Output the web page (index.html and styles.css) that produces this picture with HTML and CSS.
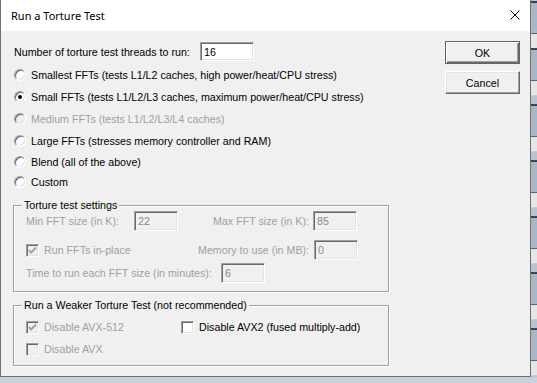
FILE: index.html
```html
<!DOCTYPE html>
<html lang="en">
<head>
  <meta charset="UTF-8">
  <meta name="viewport" content="width=device-width, initial-scale=1.0">
  <title>Run a Torture Test</title>
  <link rel="stylesheet" href="styles.css">
</head>
<body>
  <div class="dialog">
    <div class="titlebar">
      <span class="title">Run a Torture Test</span>
      <svg class="close" width="10" height="10" viewBox="0 0 10 10"><path d="M0.5 0.5 L9.5 9.5 M9.5 0.5 L0.5 9.5" stroke="#000" stroke-width="1" fill="none"/></svg>
    </div>
    <div class="content">
      <div class="main">
        <div class="threads">
          <span class="threads-label">Number of torture test threads to run:</span>
          <span class="field threads-field">16</span>
        </div>

        <div class="options">
          <div class="option"><span class="radio"></span>Smallest FFTs (tests L1/L2 caches, high power/heat/CPU stress)</div>
          <div class="option"><span class="radio checked"></span>Small FFTs (tests L1/L2/L3 caches, maximum power/heat/CPU stress)</div>
          <div class="option disabled"><span class="radio"></span>Medium FFTs (tests L1/L2/L3/L4 caches)</div>
          <div class="option"><span class="radio"></span>Large FFTs (stresses memory controller and RAM)</div>
          <div class="option short"><span class="radio"></span>Blend (all of the above)</div>
          <div class="option short"><span class="radio"></span>Custom</div>
        </div>

        <div class="group settings">
          <span class="group-title">Torture test settings</span>
          <div class="row">
            <span class="cell min-label">Min FFT size (in K):</span>
            <span class="field">22</span>
            <span class="cell max-label">Max FFT size (in K):</span>
            <span class="field">85</span>
          </div>
          <div class="row row-mem">
            <span class="cell inplace">
              <span class="check"><svg width="11" height="11" viewBox="0 0 11 11"><path d="M2 5 L4 7.5 L9 2.5" stroke="#a0a0a0" stroke-width="2" fill="none"/></svg></span>Run FFTs in-place
            </span>
            <span class="cell mem-label">Memory to use (in MB):</span>
            <span class="field">0</span>
          </div>
          <div class="row row-time">
            <span class="cell time-label">Time to run each FFT size (in minutes):</span>
            <span class="field">6</span>
          </div>
        </div>

        <div class="group weaker">
          <span class="group-title">Run a Weaker Torture Test (not recommended)</span>
          <div class="check-row">
            <span class="cell avx512">
              <span class="check"><svg width="11" height="11" viewBox="0 0 11 11"><path d="M2 5 L4 7.5 L9 2.5" stroke="#a0a0a0" stroke-width="2" fill="none"/></svg></span>Disable AVX-512
            </span>
            <span class="cell enabled"><span class="check"></span>Disable AVX2 (fused multiply-add)</span>
          </div>
          <div class="check-row">
            <span class="cell"><span class="check"></span>Disable AVX</span>
          </div>
        </div>
      </div>

      <div class="buttons">
        <button class="btn default">OK</button>
        <button class="btn">Cancel</button>
      </div>
    </div>
  </div>
</body>
</html>
```

FILE: styles.css
```css
* {
  box-sizing: border-box;
}

html, body {
  margin: 0;
  padding: 0;
}

body {
  width: 537px;
  height: 383px;
  overflow: hidden;
  font-family: "Liberation Sans", Arial, sans-serif;
  font-size: 10.7px;
  color: #000;
  background:
    linear-gradient(to bottom, transparent 377px, #c7d2de 377px),
    repeating-linear-gradient(to bottom,
      #3f4246 0, #3f4246 2px,
      #a7b7c8 2px, #a7b7c8 32px,
      #5c6166 32px, #5c6166 33px,
      #e6e6e6 33px, #e6e6e6 47px,
      #c9c9c9 47px, #c9c9c9 48px,
      #b6c4d2 48px, #b6c4d2 56px);
  background-position: 0 0, 0 48px;
}

.dialog {
  width: 531px;
  height: 377px;
  background-color: #f0f0f0;
  border: 1px solid #707070;
  border-top: none;
  display: flex;
  flex-direction: column;
}

.titlebar {
  height: 31px;
  background-color: #fff;
  display: flex;
  align-items: center;
  justify-content: space-between;
  padding: 0 10px 0 10px;
  flex-shrink: 0;
}

.title {
  font-family: "Noto Sans", sans-serif;
  font-size: 11px;
  color: #000;
  margin-top: -1px;
}

.close {
  display: block;
  margin-top: -1px;
}

.content {
  display: flex;
  padding-left: 12px;
}

.main {
  width: 376px;
}

.threads {
  display: flex;
  align-items: center;
  height: 19px;
  margin-top: 11px;
  padding-left: 1px;
}

.threads-label {
  width: 186px;
}

.field {
  display: inline-flex;
  align-items: center;
  width: 44px;
  height: 20px;
  padding-left: 3px;
  background-color: #f0f0f0;
  color: #8a8a8a;
  border: 1px solid;
  border-color: #a0a0a0 #fff #fff #a0a0a0;
  box-shadow: inset 1px 1px 0 #696969, inset -1px -1px 0 #e3e3e3;
}

.threads-field {
  width: 54px;
  height: 19px;
  background-color: #fff;
  color: #000;
}

.options {
  margin-top: 3px;
}

.option {
  display: flex;
  align-items: center;
  height: 22px;
  padding-left: 1px;
}

.option.short {
  height: 20px;
}

.option.disabled {
  color: #a0a0a0;
}

.radio {
  position: relative;
  width: 12px;
  height: 12px;
  margin-right: 5px;
  border-radius: 50%;
  background-color: #fff;
  border: 1px solid;
  border-color: #a0a0a0 #fff #fff #a0a0a0;
  box-shadow: inset 1px 1px 0 #696969, inset -1px -1px 0 #e3e3e3;
}

.option.disabled .radio {
  background-color: #f0f0f0;
}

.radio.checked::after {
  content: "";
  position: absolute;
  left: 3px;
  top: 3px;
  width: 4px;
  height: 4px;
  border-radius: 50%;
  background-color: #000;
}

.group {
  position: relative;
  border: 1px solid #a0a0a0;
  box-shadow: inset 1px 1px 0 #fff, 1px 1px 0 #fff;
  padding-left: 12px;
}

.group-title {
  position: absolute;
  top: -7px;
  left: 8px;
  line-height: 13px;
  padding: 0 2px;
  background-color: #f0f0f0;
}

.settings {
  margin-top: 13px;
  padding-top: 5px;
  padding-bottom: 8px;
  color: #a0a0a0;
}

.settings .group-title,
.weaker .group-title {
  color: #000;
}

.row {
  display: flex;
  align-items: center;
  height: 20px;
}

.row-mem {
  margin-top: 9px;
}

.row-time {
  margin-top: 3px;
}

.cell {
  display: flex;
  align-items: center;
}

.min-label {
  width: 108px;
}

.max-label {
  width: 100px;
  margin-left: 35px;
}

.inplace {
  width: 172px;
}

.mem-label {
  width: 116px;
}

.time-label {
  width: 195px;
}

.check {
  display: inline-flex;
  align-items: center;
  justify-content: center;
  width: 13px;
  height: 13px;
  margin-right: 5px;
  background-color: #f0f0f0;
  border: 1px solid;
  border-color: #a0a0a0 #fff #fff #a0a0a0;
  box-shadow: inset 1px 1px 0 #696969, inset -1px -1px 0 #e3e3e3;
}

.check svg {
  display: block;
}

.weaker {
  margin-top: 13px;
  padding-top: 10px;
  padding-bottom: 5px;
  color: #a0a0a0;
}

.check-row {
  display: flex;
  align-items: center;
  height: 22px;
}

.avx512 {
  width: 155px;
}

.enabled {
  color: #000;
}

.enabled .check {
  background-color: #fff;
}

.buttons {
  display: flex;
  flex-direction: column;
  margin-left: 56px;
  padding-top: 10px;
}

.btn {
  width: 75px;
  height: 23px;
  margin: 0 0 7px 0;
  padding: 0;
  font-family: "Liberation Sans", Arial, sans-serif;
  font-size: 10.7px;
  color: #000;
  background-color: #f0f0f0;
  border: 1px solid;
  border-color: #fff #696969 #696969 #fff;
  box-shadow: inset -1px -1px 0 #a0a0a0, inset 1px 1px 0 #e3e3e3;
}

.btn.default {
  border: 1px solid #646464;
  box-shadow: inset 1px 1px 0 #fff, inset -1px -1px 0 #696969, inset -2px -2px 0 #a0a0a0;
}
```
